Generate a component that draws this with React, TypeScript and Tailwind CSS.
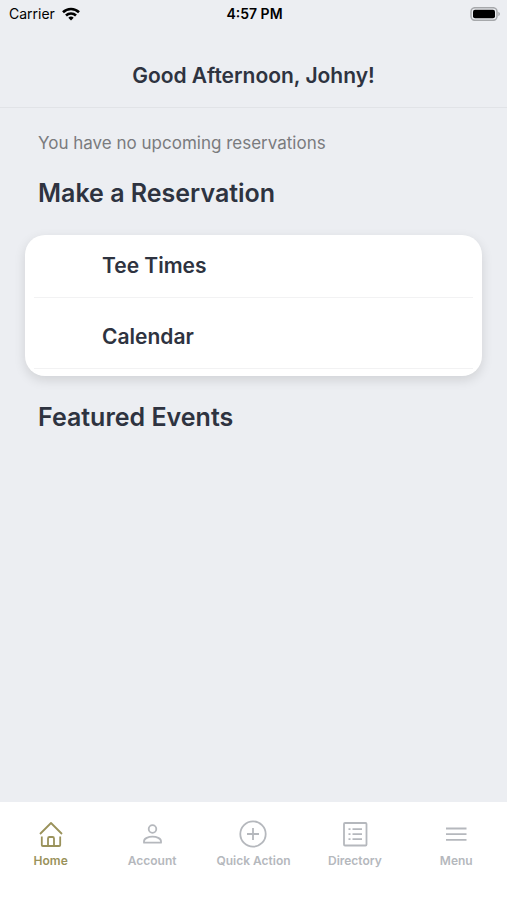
import type { ReactNode } from 'react'

interface Tab {
  label: string
  icon: ReactNode
  active?: boolean
}

const tabs: Tab[] = [
  {
    label: 'Home',
    active: true,
    icon: (
      <path d="M3 14 14 3l11 11M4.800 16.500V25q0 1 1 1h16.400q1 0 1-1v-8.500M11 26v-7.500q0-1.500 1.500-1.500h3q1.500 0 1.500 1.500V26" />
    ),
  },
  {
    label: 'Account',
    icon: (
      <>
        <circle cx="14.500" cy="9" r="3.800" />
        <path d="M6 22.700v-1.500c0-3 4.500-4.500 8.500-4.500s8.500 1.500 8.500 4.500v1.500z" />
      </>
    ),
  },
  {
    label: 'Quick Action',
    icon: (
      <>
        <circle cx="14" cy="14" r="12.700" />
        <path d="M14 8v12M8 14h12" />
      </>
    ),
  },
  {
    label: 'Directory',
    icon: (
      <>
        <rect x="3" y="3" width="22.500" height="22.500" rx="1" />
        <path d="M11.500 9.200h9.500M11.500 14.200h9.500M11.500 19.200h9.500M7.500 9.200h2M7.500 14.200h2M7.500 19.200h2" />
      </>
    ),
  },
  {
    label: 'Menu',
    icon: <path d="M4 8.500h20.500M4 14.200h20.500M4 19.800h20.500" />,
  },
]

const reservationLinks = ['Tee Times', 'Calendar']

function StatusBar() {
  return (
    <div className="grid h-7 grid-cols-3 items-center pr-[7px] pl-[9px] text-sm text-black">
      <div className="flex items-center gap-[7px]">
        <span>Carrier</span>
        <svg width="18" height="14" viewBox="0 0 18 14" fill="none" stroke="currentColor" strokeWidth="2.6" aria-hidden="true">
          <path d="M1 5.200a11.500 11.500 0 0 1 16 0" />
          <path d="M4 8.500a7.200 7.200 0 0 1 10 0" />
          <path d="M6.300 10.800a3.900 3.900 0 0 1 5.400 0L9 13.600z" fill="currentColor" stroke="none" />
        </svg>
      </div>
      <span className="text-center font-semibold">4:57 PM</span>
      <svg className="justify-self-end" width="30" height="14" viewBox="0 0 30 14" aria-hidden="true">
        <rect x="1" y=".7" width="26" height="12.600" rx="4" fill="#eceef2" stroke="#a6a8ab" strokeWidth="1.500" />
        <rect x="3" y="2.700" width="22" height="8.600" rx="2" fill="#000" />
        <path d="M28.300 4.700q1.700.8 1.700 2.300t-1.700 2.300z" fill="#a6a8ab" />
      </svg>
    </div>
  )
}

function TabBar() {
  return (
    <nav className="grid grid-cols-5 bg-white pt-[18px] pb-[31px]">
      {tabs.map((tab) => (
        <button
          key={tab.label}
          type="button"
          aria-current={tab.active ? 'page' : undefined}
          className={`flex flex-col items-center gap-[5px] text-xs font-semibold whitespace-nowrap ${tab.active ? 'text-[#9a925b]' : 'text-[#b5b8bd]'}`}
        >
          <svg width="28" height="28" viewBox="0 0 28 28" fill="none" stroke="currentColor" strokeWidth="1.800" strokeLinejoin="round" aria-hidden="true">
            {tab.icon}
          </svg>
          <span>{tab.label}</span>
        </button>
      ))}
    </nav>
  )
}

export default function App() {
  return (
    <div className="flex min-h-screen flex-col bg-[#eceef2] font-['Inter',sans-serif] text-[#2e3340]">
      <StatusBar />
      <header className="border-b border-[#e1e3e7] pt-8 pb-[15px] text-center">
        <h1 className="text-[21px] leading-8 font-semibold">Good Afternoon, Johny!</h1>
      </header>

      <main className="flex-1 px-[25px] pt-[23px]">
        <p className="px-[13px] text-[17px] leading-6 text-[#7a7b7e]">You have no upcoming reservations</p>
        <h2 className="mt-5 px-[13px] text-[25px] leading-9 font-semibold">Make a Reservation</h2>

        <ul className="mt-6 flex flex-col gap-2 rounded-[20px] bg-white px-[9px] pb-[7px] shadow-[0_4px_12px_rgba(0,0,0,0.12)]">
          {reservationLinks.map((label) => (
            <li key={label} className="border-b border-[#f2f2f3]">
              <a href="#" className="block py-[15px] pl-[68px] text-[21px] leading-8 font-semibold">
                {label}
              </a>
            </li>
          ))}
        </ul>

        <h2 className="mt-[23px] px-[13px] text-[25px] leading-9 font-semibold">Featured Events</h2>
      </main>

      <TabBar />
    </div>
  )
}
